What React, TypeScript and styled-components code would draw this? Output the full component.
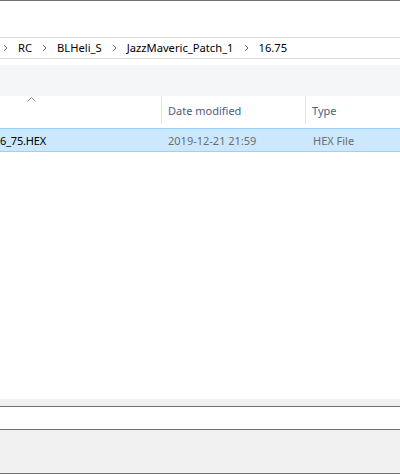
import React from "react";
import styled, { createGlobalStyle } from "styled-components";

const Global = createGlobalStyle`
  html, body { margin: 0; padding: 0; background: #ffffff; }
  body { font-family: "Segoe UI", "Noto Sans", "Liberation Sans", sans-serif; font-size: 11px; overflow: hidden; }
`;

const Window = styled.div`
  width: 400px;
  height: 474px;
  display: flex;
  flex-direction: column;
  overflow: hidden;
  background: #ffffff;
`;

const TopEdge = styled.div`
  height: 37px;
  border-top: 1px solid #6f6f6f;
  box-sizing: border-box;
  background: #ffffff;
  flex: none;
`;

const AddressBar = styled.div`
  height: 22px;
  box-sizing: border-box;
  border-top: 1px solid #d9d9d9;
  border-bottom: 1px solid #d9d9d9;
  display: flex;
  align-items: center;
  padding-left: 3px;
  gap: 10px;
  color: #000;
  white-space: nowrap;
  flex: none;
`;

const Crumb = styled.span`
  line-height: 20px;
  font-size: 11.2px;
`;

const Spacer = styled.div<{ h: number }>`
  height: ${(p) => p.h}px;
  flex: none;
`;

const Band = styled.div`
  height: 31px;
  background: #f5f6f7;
  flex: none;
`;

const Header = styled.div`
  height: 32px;
  display: grid;
  grid-template-columns: 161px 144px 1fr;
  flex: none;
`;

const HeadCell = styled.div<{ sep?: boolean }>`
  position: relative;
  display: flex;
  align-items: center;
  padding-left: ${(p) => (p.sep ? "6px" : "0")};
  border-left: ${(p) => (p.sep ? "1px solid #e5e5e5" : "none")};
  margin-bottom: 4px;
  color: #4c607a;
  white-space: nowrap;
`;

const SortArrow = styled.svg`
  position: absolute;
  left: 27px;
  top: 1px;
`;

const Row = styled.div`
  height: 24px;
  box-sizing: border-box;
  display: grid;
  grid-template-columns: 161px 144px 1fr;
  background: #cce8ff;
  border-top: 1px solid #99d1ff;
  border-bottom: 1px solid #99d1ff;
  flex: none;
`;

const Cell = styled.div<{ muted?: boolean; indent: number }>`
  display: flex;
  align-items: center;
  padding-left: ${(p) => p.indent}px;
  color: ${(p) => (p.muted ? "#6d6d6d" : "#000000")};
  white-space: nowrap;
  overflow: hidden;
`;

const NameText = styled.span`
  margin-left: -6px;
  letter-spacing: -0.2px;
`;

const Fill = styled.div`
  flex: 1;
  background: #ffffff;
`;

const LowerBand = styled.div`
  height: 8px;
  box-sizing: border-box;
  background: #f0f0f0;
  border-bottom: 1px solid #707070;
  flex: none;
`;

const InputArea = styled.div`
  height: 23px;
  box-sizing: border-box;
  background: #ffffff;
  border-bottom: 1px solid #707070;
  flex: none;
`;

const ButtonArea = styled.div`
  height: 44px;
  box-sizing: border-box;
  background: #f0f0f0;
  border-bottom: 1px solid #707070;
  flex: none;
`;

const Chevron = () => (
  <svg width="5" height="8" viewBox="0 0 5 8">
    <polyline points="1,1 4,4 1,7" fill="none" stroke="#707070" strokeWidth="1" />
  </svg>
);

export default function App() {
  const crumbs = ["RC", "BLHeli_S", "JazzMaveric_Patch_1", "16.75"];
  return (
    <Window>
      <Global />
      <TopEdge />
      <AddressBar>
        {crumbs.map((c) => (
          <React.Fragment key={c}>
            <Chevron />
            <Crumb>{c}</Crumb>
          </React.Fragment>
        ))}
      </AddressBar>
      <Spacer h={6} />
      <Band />
      <Header>
        <HeadCell>
          <SortArrow width="9" height="5" viewBox="0 0 9 5">
            <polyline points="0.5,4.5 4.5,0.5 8.5,4.5" fill="none" stroke="#8a8a8a" strokeWidth="1" />
          </SortArrow>
        </HeadCell>
        <HeadCell sep>Date modified</HeadCell>
        <HeadCell sep>Type</HeadCell>
      </Header>
      <Row>
        <Cell indent={0}>
          <NameText>16_75.HEX</NameText>
        </Cell>
        <Cell muted indent={7}>2019-12-21 21:59</Cell>
        <Cell muted indent={8}>HEX File</Cell>
      </Row>
      <Fill />
      <LowerBand />
      <InputArea />
      <ButtonArea />
    </Window>
  );
}
